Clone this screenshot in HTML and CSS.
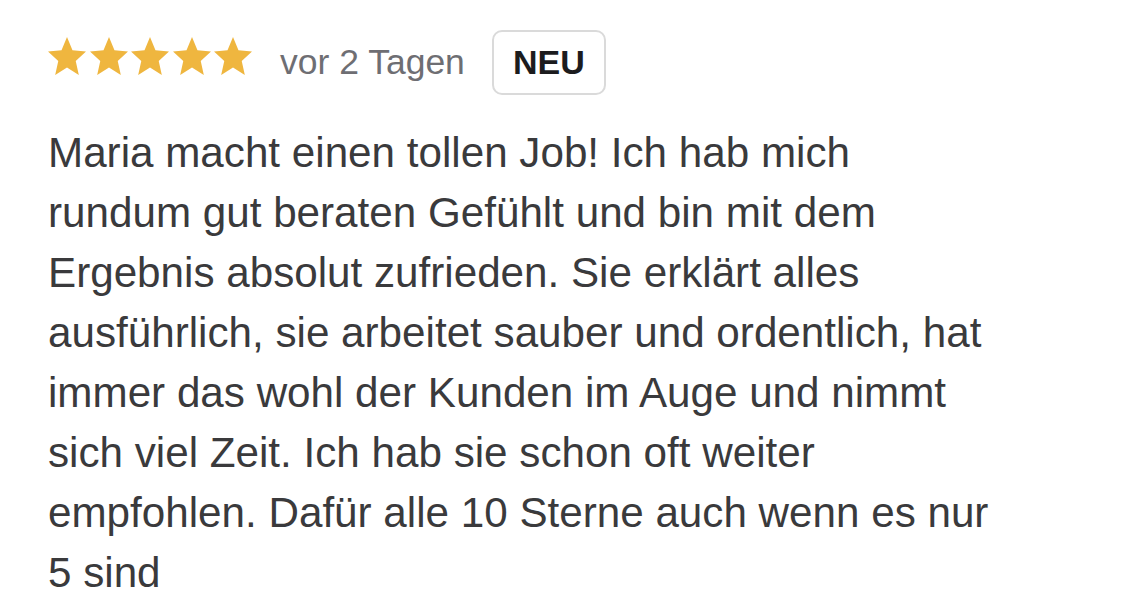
FILE: index.html
```html
<!DOCTYPE html>
<html lang="de">
<head>
<meta charset="utf-8">
<link rel="stylesheet" href="styles.css">
</head>
<body>
<div class="review">
  <div class="meta">
    <div class="stars">
      <svg class="star" viewBox="0.9 1.2 22.2 21.1" preserveAspectRatio="none"><path d="M12 1.2l3.2 7.3 7.9.7-6 5.3 1.8 7.8L12 18.2l-6.9 4.1 1.8-7.8-6-5.3 7.9-.7z"/></svg>
      <svg class="star" viewBox="0.9 1.2 22.2 21.1" preserveAspectRatio="none"><path d="M12 1.2l3.2 7.3 7.9.7-6 5.3 1.8 7.8L12 18.2l-6.9 4.1 1.8-7.8-6-5.3 7.9-.7z"/></svg>
      <svg class="star" viewBox="0.9 1.2 22.2 21.1" preserveAspectRatio="none"><path d="M12 1.2l3.2 7.3 7.9.7-6 5.3 1.8 7.8L12 18.2l-6.9 4.1 1.8-7.8-6-5.3 7.9-.7z"/></svg>
      <svg class="star" viewBox="0.9 1.2 22.2 21.1" preserveAspectRatio="none"><path d="M12 1.2l3.2 7.3 7.9.7-6 5.3 1.8 7.8L12 18.2l-6.9 4.1 1.8-7.8-6-5.3 7.9-.7z"/></svg>
      <svg class="star" viewBox="0.9 1.2 22.2 21.1" preserveAspectRatio="none"><path d="M12 1.2l3.2 7.3 7.9.7-6 5.3 1.8 7.8L12 18.2l-6.9 4.1 1.8-7.8-6-5.3 7.9-.7z"/></svg>
    </div>
    <span class="date">vor 2 Tagen</span>
    <span class="badge">NEU</span>
  </div>
  <p class="text">Maria macht einen tollen Job! Ich hab mich<br>rundum gut beraten Gefühlt und bin mit dem<br>Ergebnis absolut zufrieden. Sie erklärt alles<br>ausführlich, sie arbeitet sauber und ordentlich, hat<br>immer das wohl der Kunden im Auge und nimmt<br>sich viel Zeit. Ich hab sie schon oft weiter<br>empfohlen. Dafür alle 10 Sterne auch wenn es nur<br>5 sind</p>
</div>
</body>
</html>
```
FILE: styles.css
```css
html, body {
  margin: 0;
  padding: 0;
  background: #ffffff;
}
body {
  font-family: "Liberation Sans", Arial, sans-serif;
}
.review {
  padding: 30px 0 0 48px;
}
.meta {
  display: flex;
  align-items: center;
  height: 65px;
}
.stars {
  display: flex;
  gap: 3.5px;
  margin-bottom: 14px;
}
.star {
  width: 38px;
  height: 38px;
  fill: #efb63f;
}
.date {
  margin-left: 28px;
  font-size: 35.5px;
  color: #6e6e73;
}
.badge {
  margin-left: 27px;
  box-sizing: border-box;
  width: 114px;
  height: 65px;
  border: 2px solid #dadada;
  border-radius: 10px;
  display: flex;
  align-items: center;
  justify-content: center;
  font-size: 34px;
  font-weight: bold;
  color: #1c1c1e;
}
.text {
  margin: 28px 0 0 0;
  font-size: 42.2px;
  line-height: 60px;
  color: #3a3a3c;
}
```
